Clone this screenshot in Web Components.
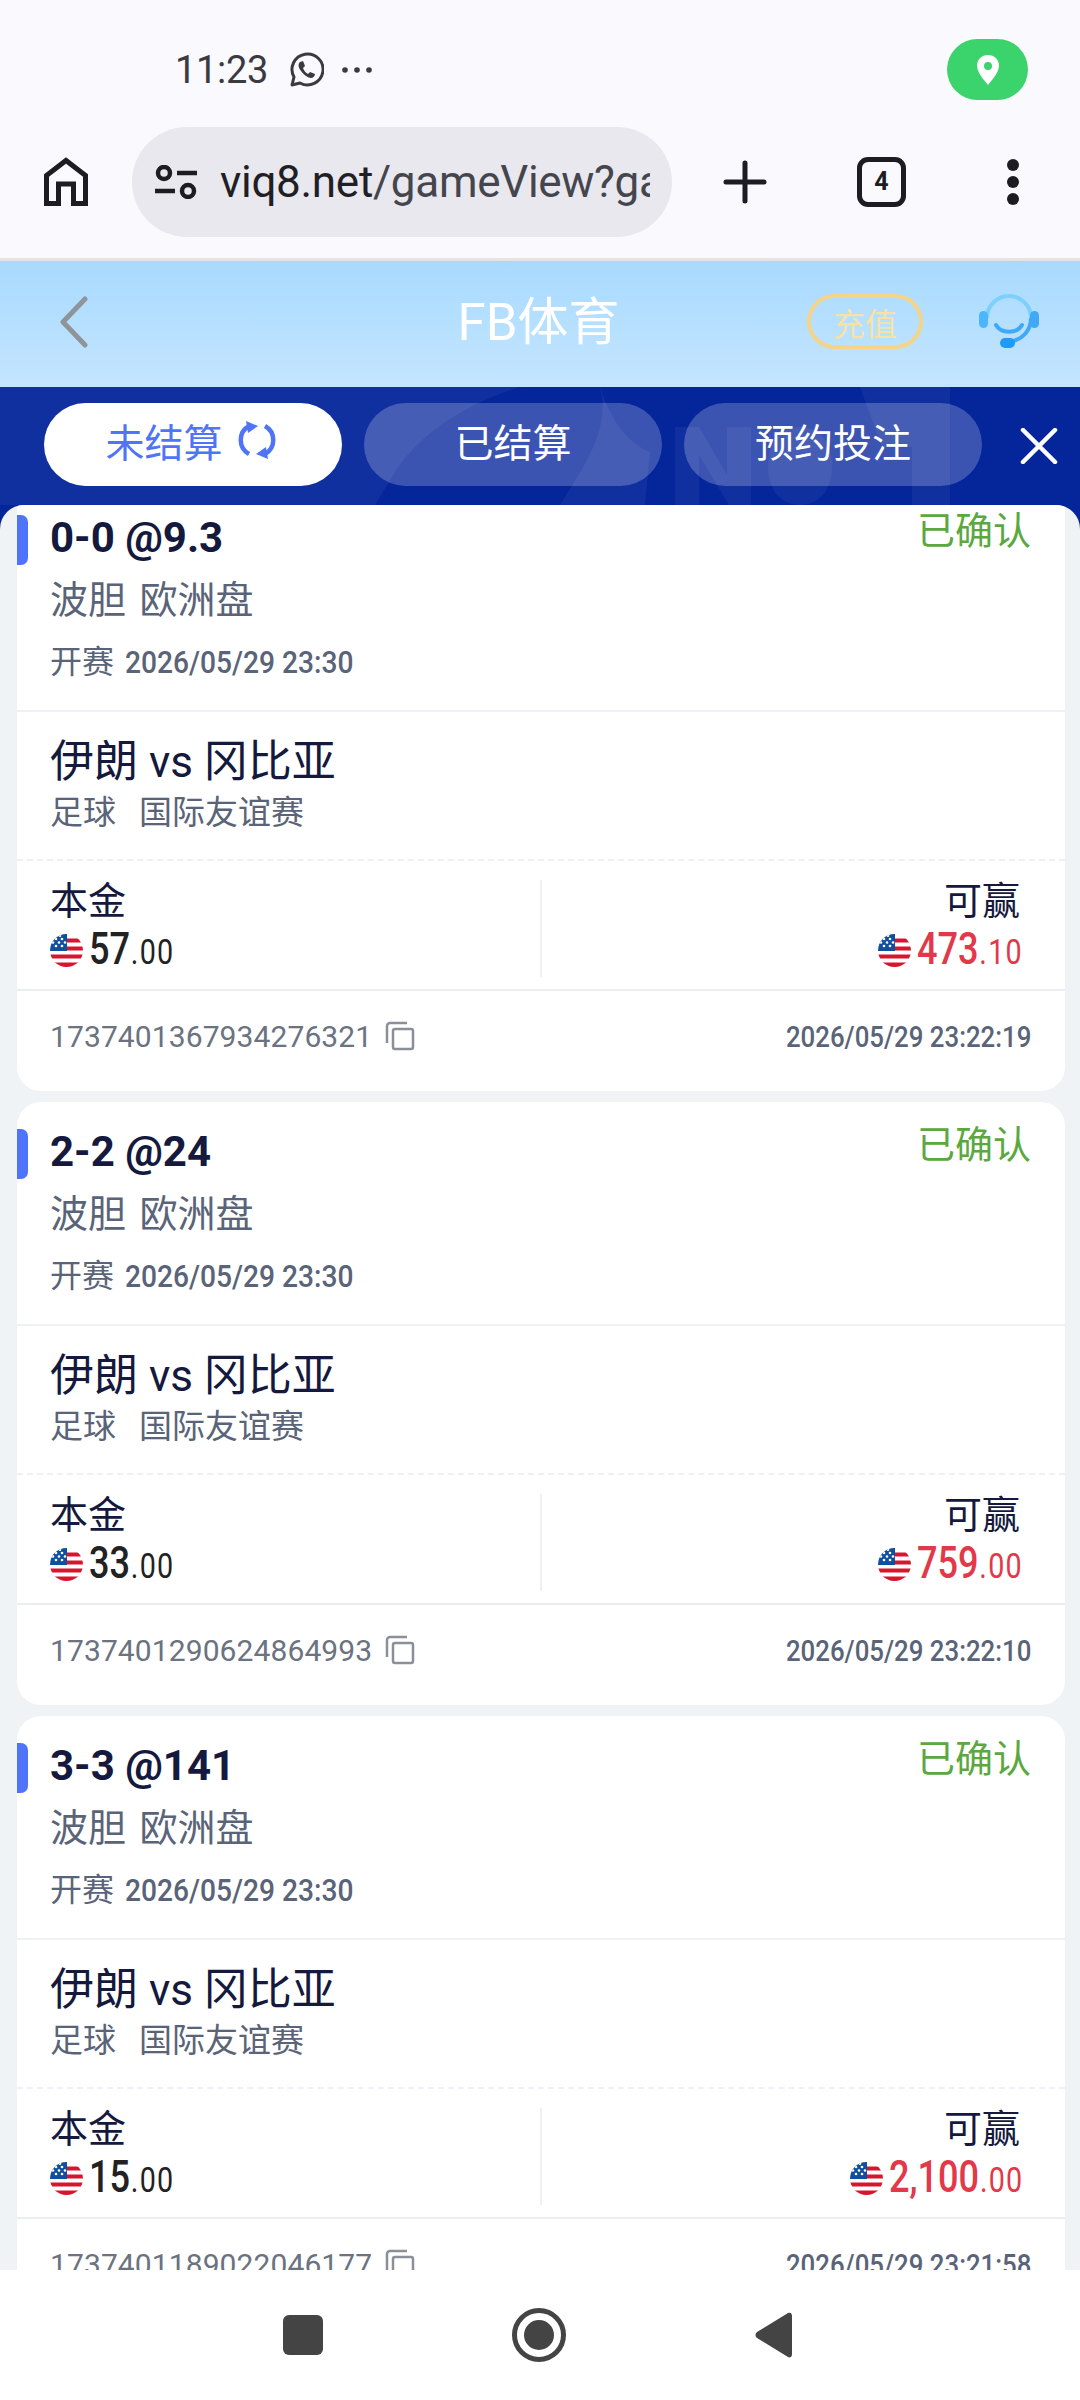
<!DOCTYPE html>
<html lang="zh">
<head>
<meta charset="utf-8">
<style>
  html, body { margin: 0; height: 100%; }
  body { font-family: Roboto, "Noto Sans CJK SC", sans-serif; }
</style>
</head>
<body>
<phone-app></phone-app>
<script>
(function () {
  const FONT = 'Roboto, "Noto Sans CJK SC", sans-serif';
  const NUM_SCALE = 0.82;

  class StatusBar extends HTMLElement {
    constructor() {
      super();
      this.attachShadow({ mode: 'open' }).innerHTML = `
        <style>
          :host { display: flex; align-items: center; height: 120px; padding: 19px 52px 0 175px; box-sizing: border-box; color: #3a3a40; }
          .time { font-size: 38px; letter-spacing: -0.3px; }
          svg { display: block; }
          .wa { margin-left: 20px; }
          .dots { margin-left: 17px; }
          .pill { margin-left: auto; width: 81px; height: 61px; border-radius: 31px; background: #3bd36b; display: flex; align-items: center; justify-content: center; }
        </style>
        <span class="time">11:23</span>
        <svg class="wa" width="36" height="36" viewBox="0 0 36 36" fill="none" stroke="#3a3a40" stroke-width="3">
          <path d="M4 33l2-8A15.5 15.5 0 1 1 12 31z" stroke-linejoin="round"/>
          <path d="M12 10c-2 2-2 5 1 9s7 7 10 7c2 0 4-2 4-4l-5-2-2 2c-2-1-4-3-5-6l2-2-2-5z" fill="#3a3a40" stroke="none"/>
        </svg>
        <svg class="dots" width="32" height="8" viewBox="0 0 32 8" fill="#3a3a40"><circle cx="4" cy="4" r="2.800"/><circle cx="16" cy="4" r="2.800"/><circle cx="28" cy="4" r="2.800"/></svg>
        <div class="pill">
          <svg width="24" height="32" viewBox="0 0 24 32"><path fill-rule="evenodd" fill="#fff" d="M12 1C5.8 1 1 5.6 1 11.6 1 18.6 8 26 12 31c4-5 11-12.400 11-19.400C23 5.600 18.200 1 12 1zm0 7a4 4 0 1 1 0 8 4 4 0 0 1 0-8z"/></svg>
        </div>
      `;
    }
  }

  class BrowserBar extends HTMLElement {
    constructor() {
      super();
      this.attachShadow({ mode: 'open' }).innerHTML = `
        <style>
          :host { display: flex; align-items: center; height: 141px; padding: 0 0 15px 44px; box-sizing: border-box; border-bottom: 3px solid #e3e4ea; }
          svg { display: block; flex: none; }
          .url { width: 540px; height: 110px; margin-left: 44px; border-radius: 55px; background: #e8e8ee; display: flex; align-items: center; padding: 0 22px 0 23px; box-sizing: border-box; }
          .text { margin-left: 23px; flex: 1; overflow: hidden; white-space: nowrap; font-size: 44px; color: #45454d; letter-spacing: -0.3px; }
          .text b { font-weight: 400; color: #1f1f25; }
          .plus { margin-left: 51px; }
          .tabs { margin-left: 90px; width: 49px; height: 50px; box-sizing: border-box; border: 5px solid #1c1c22; border-radius: 11px; display: flex; align-items: center; justify-content: center; font-size: 25px; font-weight: 700; color: #1c1c22; }
          .more { margin-left: 100px; }
        </style>
        <svg width="44" height="49" viewBox="0 0 44 49" fill="none" stroke="#1c1c22" stroke-width="5">
          <path d="M2.500 46.500V18.500L22 3.500l19.500 15v28H29.500V27h-15v19.500z"/>
        </svg>
        <div class="url">
          <svg width="42" height="34" viewBox="0 0 42 34" fill="none" stroke="#1c1c22" stroke-width="4.500">
            <circle cx="9" cy="8" r="6"/><path d="M22 8h20M0 26h20"/><circle cx="33" cy="26" r="6"/>
          </svg>
          <div class="text"><b>viq8.net</b>/gameView?game=fb</div>
        </div>
        <svg class="plus" width="44" height="44" viewBox="0 0 44 44" stroke="#1c1c22" stroke-width="5" stroke-linecap="round"><path d="M22 3v38M3 22h38"/></svg>
        <div class="tabs">4</div>
        <svg class="more" width="14" height="46" viewBox="0 0 14 46" fill="#1c1c22"><circle cx="7" cy="6" r="6"/><circle cx="7" cy="23" r="6"/><circle cx="7" cy="40" r="6"/></svg>
      `;
    }
  }

  class PageHeader extends HTMLElement {
    constructor() {
      super();
      this.attachShadow({ mode: 'open' }).innerHTML = `
        <style>
          :host { display: flex; align-items: center; height: 126px; padding: 0 40px 5px 60px; box-sizing: border-box; background: linear-gradient(#a8daff, #c4e5ff); position: relative; }
          svg { display: block; flex: none; }
          .title { position: absolute; left: 0; right: 0; top: 31px; text-align: center; padding-right: 3px; font-size: 51px; line-height: 62px; color: #fff; }
          .pay { margin-left: auto; width: 116px; height: 55px; box-sizing: border-box; border: 4px solid #f3d488; border-radius: 28px; display: flex; align-items: center; justify-content: center; font-size: 32px; color: #f6e3a4; }
          .agent { margin-left: 55px; }
        </style>
        <svg width="28" height="52" viewBox="0 0 28 52" fill="none" stroke="#8f9499" stroke-width="5" stroke-linecap="round" stroke-linejoin="round"><path d="M25 3L3 26l22 23"/></svg>
        <div class="title">FB体育</div>
        <div class="pay">充值</div>
        <svg class="agent" width="62" height="56" viewBox="0 0 62 56" fill="none">
          <path d="M9 24a22 22 0 0 1 44 0" stroke="#7cd0ff" stroke-width="4"/>
          <path d="M53 24c0 12-8 22-22 24" stroke="#3fa9f5" stroke-width="4"/>
          <path d="M18 31c5 9 21 9 26 0" stroke="#3fa9f5" stroke-width="4" stroke-linecap="round"/>
          <rect x="1" y="17" width="9" height="17" rx="4.500" fill="#4db5fb"/>
          <rect x="52" y="17" width="9" height="17" rx="4.500" fill="#3fa9f5"/>
          <rect x="22" y="44" width="15" height="10" rx="5" fill="#1e9bf8"/>
        </svg>
      `;
    }
  }

  class TabPill extends HTMLElement {
    constructor() {
      super();
      this.attachShadow({ mode: 'open' }).innerHTML = `
        <style>
          :host { display: flex; align-items: center; justify-content: center; gap: 15px; width: 298px; height: 83px; padding-bottom: 9px; box-sizing: border-box; border-radius: 42px; background: rgba(255,255,255,.22); color: #fff; font-size: 39px; }
          :host([active]) { background: #fff; color: #4f74f5; padding-right: 5px; }
        </style>
        <slot></slot>
      `;
    }
  }

  class BetTabs extends HTMLElement {
    constructor() {
      super();
      this.attachShadow({ mode: 'open' }).innerHTML = `
        <style>
          :host { display: flex; align-items: flex-start; gap: 22px; height: 118px; padding: 16px 0 0 44px; box-sizing: border-box; background: #05259b; position: relative; overflow: hidden; }
          .bg { position: absolute; left: 0; top: 0; }
          tab-pill, .close { position: relative; }
          svg { display: block; }
          .close { margin: 25px 0 0 16px; }
        </style>
        <svg class="bg" width="1080" height="118" viewBox="0 0 1080 118" fill="#fff" fill-opacity=".05">
          <path d="M0 0H520C470 15 420 45 395 85L375 118H0z"/>
          <path d="M600 0C610 30 625 55 650 65L645 118H560C590 70 610 40 600 0z"/>
          <path d="M675 40h24l28 48V40h24v78h-22l-30-50v50h-24z"/>
          <path d="M800 40c20 0 32 16 32 39s-12 39-32 39-32-16-32-39 12-39 32-39z"/>
          <path d="M860 0h90v118h-38V60h-30z"/>
        </svg>
        <tab-pill active>未结算
          <svg width="38" height="38" viewBox="0 0 38 38" fill="none" stroke="#4f74f5" stroke-width="4.500">
            <path d="M11 5A16 16 0 0 0 11 33"/><path d="M27 33A16 16 0 0 0 27 5"/>
            <path d="M8 0l12 5-10 7z" fill="#4f74f5" stroke="none"/><path d="M30 38l-12-5 10-7z" fill="#4f74f5" stroke="none"/>
          </svg>
        </tab-pill>
        <tab-pill>已结算</tab-pill>
        <tab-pill>预约投注</tab-pill>
        <svg class="close" width="38" height="36" viewBox="0 0 38 36" stroke="#fff" stroke-width="4.500" stroke-linecap="round"><path d="M3 2l32 32M35 2L3 34"/></svg>
      `;
    }
  }

  class MoneyAmount extends HTMLElement {
    static get observedAttributes() { return ['int', 'dec']; }
    constructor() {
      super();
      this.attachShadow({ mode: 'open' }).innerHTML = `
        <style>
          :host { display: inline-flex; align-items: center; color: #222; height: 53px; margin-top: 2px; }
          svg { display: block; flex: none; margin-right: 6px; }
          .num { display: inline-flex; align-items: baseline; line-height: 53px; transform: scaleX(${NUM_SCALE}); transform-origin: left center; }
          .int { font-size: 44px; font-weight: 500; }
          .dec { font-size: 35px; font-weight: 400; letter-spacing: 1.5px; margin-left: 1px; }
        </style>
        <svg width="33" height="33" viewBox="0 0 33 33">
          <defs><clipPath id="c"><circle cx="16.500" cy="16.500" r="16.500"/></clipPath></defs>
          <g clip-path="url(#c)">
            <rect width="33" height="33" fill="#fff"/>
            <path d="M16 4.500h17v4H16zM16 12.500h17v4H16zM0 20.500h33v4H0zM0 28.500h33v4.500H0z" fill="#d8142f"/>
            <rect width="17" height="17" fill="#0f4f9f"/>
            <g fill="#fff"><circle cx="6" cy="5" r="1.300"/><circle cx="12" cy="5" r="1.300"/><circle cx="9" cy="8.500" r="1.300"/><circle cx="3" cy="8.500" r="1.300"/><circle cx="15" cy="8.500" r="1.300"/><circle cx="6" cy="12" r="1.300"/><circle cx="12" cy="12" r="1.300"/><circle cx="10" cy="1.800" r="1.300"/></g>
          </g>
        </svg>
        <span class="num"><span class="int"></span><span class="dec"></span></span>
      `;
    }

    attributeChangedCallback(name, _old, value) {
      this.shadowRoot.querySelector('.' + name).textContent = value;
      // the number is squeezed by a transform, so give back the width it no longer uses
      const num = this.shadowRoot.querySelector('.num');
      num.style.marginRight = -num.offsetWidth * (1 - NUM_SCALE) + 'px';
    }
  }
  customElements.define('money-amount', MoneyAmount);

  const cardTemplate = document.createElement('template');
  cardTemplate.innerHTML = `
    <style>
      :host { display: block; position: relative; flex: none; height: 603px; background: #fff; border-radius: 24px; font-family: ${FONT}; color: #14193d; overflow: hidden; }
      .mark { position: absolute; left: 0; top: 27px; width: 11px; height: 50px; background: #4f74f9; border-radius: 0 7px 7px 0; }
      .top { height: 224px; box-sizing: border-box; padding: 25px 34px 0 33px; border-bottom: 2px solid #eef0f5; }
      .head { display: flex; justify-content: space-between; align-items: flex-start; }
      .pick { font-size: 42px; font-weight: 700; line-height: 50px; }
      .status { font-size: 38px; line-height: 50px; color: #5aa83f; margin-top: -7px; }
      .market { font-size: 38px; line-height: 50px; margin-top: 12px; color: #5a6478; word-spacing: 4px; }
      .start { display: flex; align-items: center; font-size: 32px; line-height: 44px; margin-top: 15px; color: #5a6478; }
      .start .date { font-weight: 500; margin-left: 11px; transform: scaleX(.88); transform-origin: left center; }
      .match { height: 149px; box-sizing: border-box; padding: 23px 33px 0; border-bottom: 2px dashed #eef0f5; }
      .teams { font-size: 44px; line-height: 54px; }
      .league { display: flex; gap: 23px; font-size: 33px; line-height: 44px; margin-top: 2px; color: #5a6478; }
      .money { display: grid; grid-template-columns: 523px 1fr; height: 130px; padding: 19px 0 15px; box-sizing: border-box; border-bottom: 2px solid #ececf3; }
      .col { display: flex; flex-direction: column; align-items: flex-start; padding-left: 33px; }
      .col.win { align-items: flex-end; padding: 0 42px 0 0; border-left: 2px solid #eef0f5; }
      .col.win .label { padding-right: 3px; }
      .col.win money-amount { color: #e2394a; }
      .label { font-size: 38px; line-height: 42px; }
      .foot { display: flex; justify-content: space-between; align-items: center; padding: 21px 34px 0 33px; height: 48px; }
      .id { display: flex; align-items: center; gap: 13px; font-size: 30px; letter-spacing: .1px; color: #6b7280; }
      .time { font-weight: 500; font-size: 30px; color: #5a6478; transform: scaleX(.86); transform-origin: right center; }
      svg { display: block; }
    </style>
    <div class="mark"></div>
    <div class="top">
      <div class="head"><span class="pick"></span><span class="status">已确认</span></div>
      <div class="market">波胆 欧洲盘</div>
      <div class="start"><span>开赛</span><span class="date">2026/05/29 23:30</span></div>
    </div>
    <div class="match">
      <div class="teams">伊朗 vs 冈比亚</div>
      <div class="league"><span>足球</span><span>国际友谊赛</span></div>
    </div>
    <div class="money">
      <div class="col"><span class="label">本金</span><money-amount class="stake"></money-amount></div>
      <div class="col win"><span class="label">可赢</span><money-amount class="payout"></money-amount></div>
    </div>
    <div class="foot">
      <span class="id"><span class="no"></span>
        <svg width="30" height="30" viewBox="0 0 30 30" fill="none" stroke="#8a8f99" stroke-width="2.500"><path d="M2 22V5a3 3 0 0 1 3-3h17"/><rect x="8" y="8" width="20" height="20" rx="2"/></svg>
      </span>
      <span class="time"></span>
    </div>
  `;

  class BetCard extends HTMLElement {
    constructor() {
      super();
      this.attachShadow({ mode: 'open' }).append(cardTemplate.content.cloneNode(true));
    }

    connectedCallback() {
      const root = this.shadowRoot;
      root.querySelector('.pick').textContent = this.getAttribute('pick');
      root.querySelector('.no').textContent = this.getAttribute('no');
      root.querySelector('.time').textContent = this.getAttribute('time');
      const [si, sd] = this.getAttribute('stake').split('.');
      const [pi, pd] = this.getAttribute('payout').split('.');
      const stake = root.querySelector('.stake');
      stake.setAttribute('int', si);
      stake.setAttribute('dec', '.' + sd);
      const payout = root.querySelector('.payout');
      payout.setAttribute('int', pi);
      payout.setAttribute('dec', '.' + pd);
    }
  }

  class BetList extends HTMLElement {
    constructor() {
      super();
      this.attachShadow({ mode: 'open' }).innerHTML = `
        <style>
          :host { display: flex; flex-direction: column; gap: 11px; flex: 1; min-height: 0; overflow: hidden; padding: 0 15px 0 17px; background: #eff3f6; border-radius: 24px 24px 0 0; }
          ::slotted(:first-child) { margin-top: -17px; }
        </style>
        <slot></slot>
      `;
    }
  }

  class NavBar extends HTMLElement {
    constructor() {
      super();
      this.attachShadow({ mode: 'open' }).innerHTML = `
        <style>
          :host { display: flex; align-items: center; height: 130px; padding-left: 283px; box-sizing: border-box; background: #fff; }
          svg { display: block; flex: none; }
          .home, .back { margin-left: 189px; }
        </style>
        <svg width="40" height="40" viewBox="0 0 40 40"><rect width="40" height="40" rx="6" fill="#444"/></svg>
        <svg class="home" width="54" height="54" viewBox="0 0 54 54" fill="none"><circle cx="27" cy="27" r="24.500" stroke="#444" stroke-width="5"/><circle cx="27" cy="27" r="15" fill="#444"/></svg>
        <svg class="back" width="37" height="46" viewBox="0 0 37 46"><path d="M33 1c2-1 4 0 4 3v38c0 3-2 4-4 3L2 26c-2-1.500-2-4.500 0-6z" fill="#444"/></svg>
      `;
    }
  }

  class PhoneApp extends HTMLElement {
    constructor() {
      super();
      this.attachShadow({ mode: 'open' }).innerHTML = `
        <style>
          :host { display: flex; flex-direction: column; width: 1080px; height: 2400px; overflow: hidden; background: #f9f9fe; }
          .content { flex: 1; min-height: 0; display: flex; background: #05259b; }
        </style>
        <status-bar></status-bar>
        <browser-bar></browser-bar>
        <page-header></page-header>
        <bet-tabs></bet-tabs>
        <div class="content">
          <bet-list>
            <bet-card pick="0-0 @9.3" stake="57.00" payout="473.10" no="1737401367934276321" time="2026/05/29 23:22:19"></bet-card>
            <bet-card pick="2-2 @24" stake="33.00" payout="759.00" no="1737401290624864993" time="2026/05/29 23:22:10"></bet-card>
            <bet-card pick="3-3 @141" stake="15.00" payout="2,100.00" no="1737401189022046177" time="2026/05/29 23:21:58"></bet-card>
          </bet-list>
        </div>
        <nav-bar></nav-bar>
      `;
    }
  }

  customElements.define('status-bar', StatusBar);
  customElements.define('browser-bar', BrowserBar);
  customElements.define('page-header', PageHeader);
  customElements.define('tab-pill', TabPill);
  customElements.define('bet-tabs', BetTabs);
  customElements.define('bet-card', BetCard);
  customElements.define('bet-list', BetList);
  customElements.define('nav-bar', NavBar);
  customElements.define('phone-app', PhoneApp);
})();
</script>
</body>
</html>
